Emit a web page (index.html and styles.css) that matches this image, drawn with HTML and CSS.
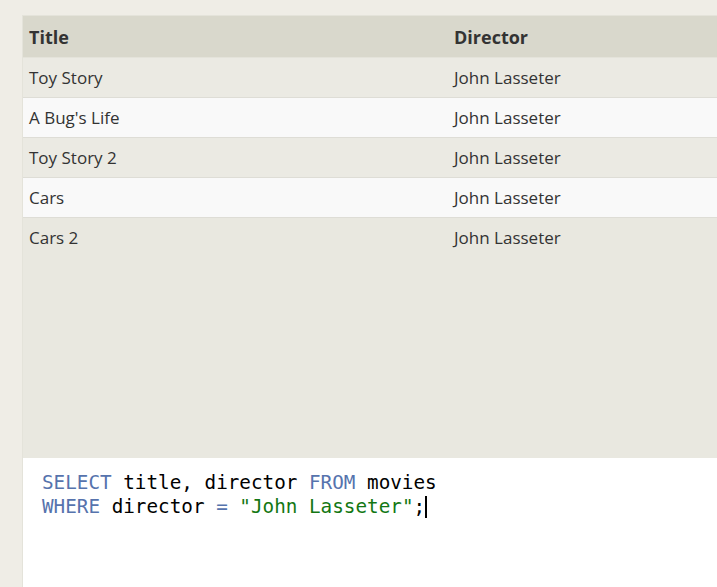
FILE: index.html
```html
<!DOCTYPE html>
<html>
<head>
<meta charset="utf-8">
<link rel="stylesheet" href="styles.css">
</head>
<body>
<div class="page">
  <div class="panel">
    <div class="results">
      <table class="table">
        <thead>
          <tr><th class="col-title">Title</th><th>Director</th></tr>
        </thead>
        <tbody>
          <tr><td>Toy Story</td><td>John Lasseter</td></tr>
          <tr><td>A Bug's Life</td><td>John Lasseter</td></tr>
          <tr><td>Toy Story 2</td><td>John Lasseter</td></tr>
          <tr><td>Cars</td><td>John Lasseter</td></tr>
          <tr><td>Cars 2</td><td>John Lasseter</td></tr>
        </tbody>
      </table>
    </div>
    <div class="editor">
      <div class="code"><span class="kw">SELECT</span> title, director <span class="kw">FROM</span> movies</div>
      <div class="code"><span class="kw">WHERE</span> director <span class="op">=</span> <span class="str">"John Lasseter"</span>;<span class="cursor"></span></div>
    </div>
  </div>
</div>
</body>
</html>
```
FILE: styles.css
```css
html, body {
  margin: 0;
  padding: 0;
  background: #efede6;
  overflow: hidden;
}
.page {
  padding: 15px 0 0 22px;
  height: 572px;
}
.panel {
  display: flex;
  flex-direction: column;
  height: 100%;
  border-top: 1px solid #e4e3da;
  border-left: 1px solid #e4e3da;
  box-sizing: border-box;
}
.results {
  background: #e9e8e0;
  height: 442px;
  overflow: hidden;
}
.table {
  width: 100%;
  border-collapse: collapse;
  font-family: "Open Sans", "Noto Sans", sans-serif;
  font-size: 17px;
  color: #333;
}
.table th, .table td {
  text-align: left;
  padding: 0 6px;
}
.table .col-title {
  width: 413px;
}
.table th {
  background: #d9d8cc;
  height: 41px;
  font-weight: 700;
  font-size: 18px;
  color: #333;
  border-bottom: 1px solid #e4e3da;
}
.table td {
  height: 39px;
  border-bottom: 1px solid #deddd6;
}
.table tbody tr:nth-child(odd) td {
  background: #ebeae3;
}
.table tbody tr:nth-child(even) td {
  background: #f9f9f9;
}
.table tbody tr:last-child td {
  border-bottom: none;
  background: transparent;
}
.editor {
  flex: 1;
  background: #fff;
  padding: 13px 0 0 19px;
}
.code {
  font-family: "DejaVu Sans Mono", monospace;
  font-size: 19.3px;
  line-height: 24px;
  color: #000;
  white-space: pre;
}
.kw, .op { color: #5673ad; }
.str { color: #137713; }
.cursor {
  display: inline-block;
  width: 2px;
  height: 22px;
  background: #000;
  vertical-align: -5px;
}
```
